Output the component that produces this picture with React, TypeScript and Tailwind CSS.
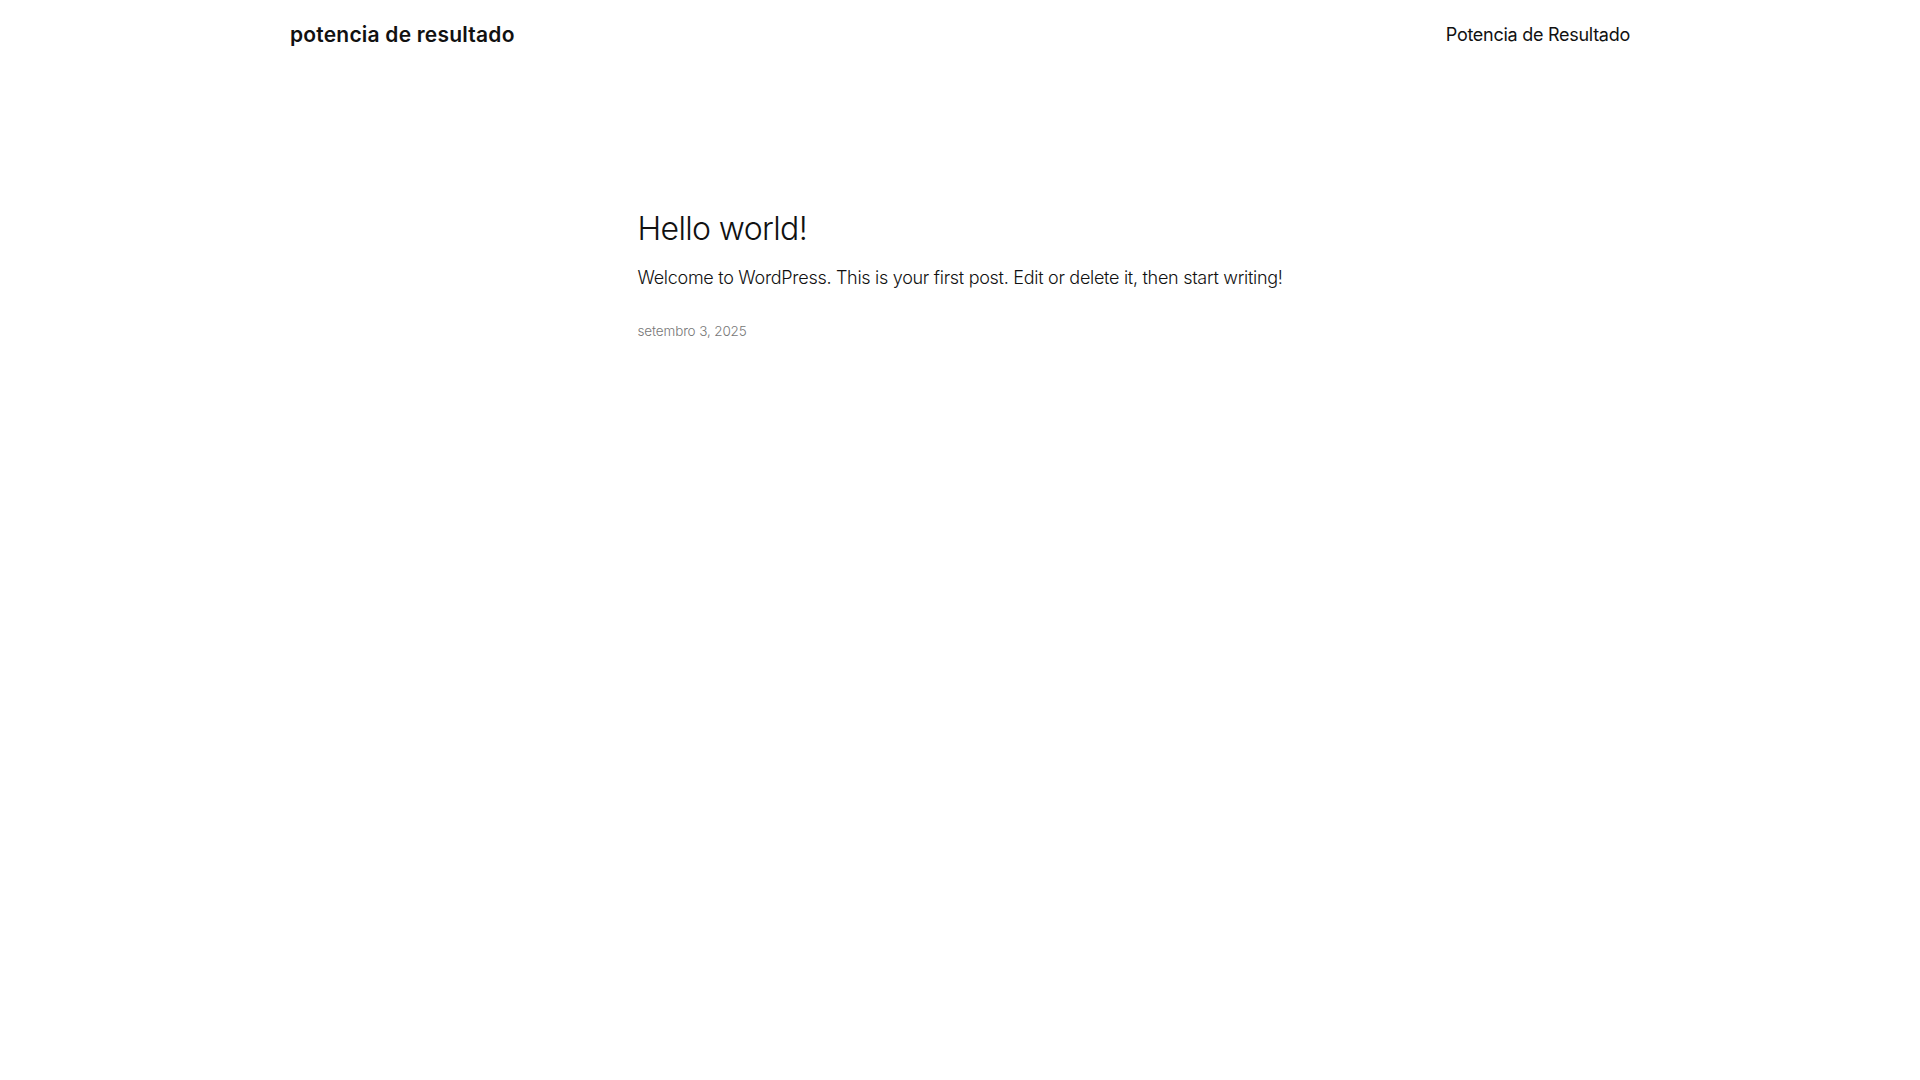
const App = () => {
  return (
    <div className="bg-white min-h-screen font-['Inter',sans-serif] text-[#111111]">
      <header className="max-w-[1340px] mx-auto flex items-center justify-between pt-[21px]">
        <a href="#" className="text-[21px] leading-[28px] font-semibold tracking-[0.01em]">
          potencia de resultado
        </a>
        <nav>
          <a href="#" className="text-[18px] leading-[28px] font-normal tracking-[-0.015em]">
            Potencia de Resultado
          </a>
        </nav>
      </header>

      <main className="max-w-[645px] mx-auto mt-[160px]">
        <h2 className="text-[32px] leading-[40px] font-light tracking-[-0.02em]">Hello world!</h2>
        <p className="mt-[14px] text-[18px] leading-[29px] font-light tracking-[-0.016em] whitespace-nowrap">
          Welcome to WordPress. This is your first post. Edit or delete it, then start writing!
        </p>
        <p className="mt-[29px] text-[13.5px] leading-[21px] font-light tracking-[-0.01em] text-[#777777]">
          setembro 3, 2025
        </p>
      </main>
    </div>
  );
};

export default App;
